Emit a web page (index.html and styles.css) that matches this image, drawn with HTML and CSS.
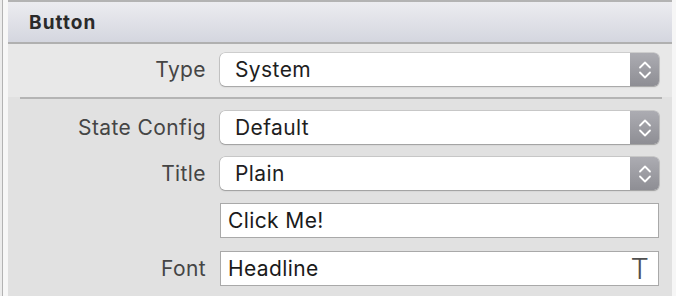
FILE: index.html
```html
<!DOCTYPE html>
<html>
<head>
<meta charset="utf-8">
<link rel="stylesheet" href="styles.css">
</head>
<body>
<div class="shell">
  <div class="edge"></div>
  <div class="panel">
    <div class="header">Button</div>
    <div class="section top">
      <div class="row">
        <div class="label">Type</div>
        <div class="popup"><span class="value">System</span><span class="stepper"><svg width="14" height="22" viewBox="0 0 14 22"><path d="M2 8.5 L7 3.5 L12 8.5 M2 13.5 L7 18.5 L12 13.5" fill="none" stroke="#fff" stroke-width="1.8" stroke-linecap="round" stroke-linejoin="round"/></svg></span></div>
      </div>
    </div>
    <div class="sep"></div>
    <div class="section bottom">
      <div class="row">
        <div class="label">State Config</div>
        <div class="popup"><span class="value">Default</span><span class="stepper"><svg width="14" height="22" viewBox="0 0 14 22"><path d="M2 8.5 L7 3.5 L12 8.5 M2 13.5 L7 18.5 L12 13.5" fill="none" stroke="#fff" stroke-width="1.8" stroke-linecap="round" stroke-linejoin="round"/></svg></span></div>
      </div>
      <div class="row">
        <div class="label">Title</div>
        <div class="popup"><span class="value">Plain</span><span class="stepper"><svg width="14" height="22" viewBox="0 0 14 22"><path d="M2 8.5 L7 3.5 L12 8.5 M2 13.5 L7 18.5 L12 13.5" fill="none" stroke="#fff" stroke-width="1.8" stroke-linecap="round" stroke-linejoin="round"/></svg></span></div>
      </div>
      <div class="row">
        <div class="label"></div>
        <div class="field"><span class="text">Click Me!</span></div>
      </div>
      <div class="row">
        <div class="label">Font</div>
        <div class="field"><span class="text">Headline</span><span class="ticon">T</span></div>
      </div>
    </div>
  </div>
</div>
</body>
</html>
```

FILE: styles.css
```css
html, body {
  margin: 0;
  padding: 0;
  background: #f6f6f6;
  font-family: Inter, "Open Sans", "Liberation Sans", sans-serif;
}
.shell {
  display: flex;
  height: 296px;
  overflow: hidden;
}
.edge {
  width: 8px;
  flex: none;
  background: linear-gradient(to right, #ececec 0 2px, #b3b3b3 2px 3px, #f7f7f7 3px 8px);
}
.panel {
  width: 664px;
  flex: none;
  display: flex;
  flex-direction: column;
  background: #e1e1e1;
}
.header {
  height: 39px;
  border-top: 2px solid #b3b3b3;
  border-bottom: 2px solid #b0b0b0;
  background: linear-gradient(to bottom, #ececf0, #d4d6df);
  display: flex;
  align-items: center;
  padding-left: 21px;
  padding-top: 1px;
  box-sizing: content-box;
  font-weight: 700;
  font-size: 19px;
  color: #2a2a2a;
  letter-spacing: 1.1px;
}
.section {
  display: flex;
  flex-direction: column;
  gap: 13px;
  padding-right: 13px;
}
.section.top {
  background: #e8e8e8;
  padding-top: 9px;
  padding-bottom: 11px;
}
.sep {
  height: 2px;
  background: #b4b4b4;
  margin: 0 10px 0 12px;
}
.section.bottom {
  padding-top: 12px;
}
.row {
  display: grid;
  grid-template-columns: 198px 1fr;
  column-gap: 14px;
  align-items: center;
}
.label {
  text-align: right;
  font-size: 21px;
  letter-spacing: 0.4px;
  color: #454545;
}
.popup {
  height: 33px;
  background: #fff;
  border-radius: 5px;
  box-shadow: 0 0 0 0.6px rgba(0,0,0,0.22), 0 1px 1.5px rgba(0,0,0,0.22);
  display: flex;
  align-items: center;
  overflow: hidden;
}
.popup .value {
  flex: 1;
  padding-left: 15px;
  font-size: 21px;
  letter-spacing: 0.4px;
  color: #1e1e1e;
}
.stepper {
  width: 29px;
  align-self: stretch;
  background: linear-gradient(to bottom, #acacb2, #8e8e94);
  display: flex;
  align-items: center;
  justify-content: center;
}
.field {
  height: 33px;
  background: #fff;
  border: 1px solid #a9a9a9;
  display: flex;
  align-items: center;
}
.field .text {
  flex: 1;
  padding-left: 7px;
  font-size: 21px;
  letter-spacing: 0.4px;
  color: #1a1a1a;
}
.ticon {
  font-family: Inter, sans-serif;
  font-weight: 300;
  font-size: 29px;
  color: #4f4f4f;
  padding-right: 9px;
  line-height: 1;
}
```
